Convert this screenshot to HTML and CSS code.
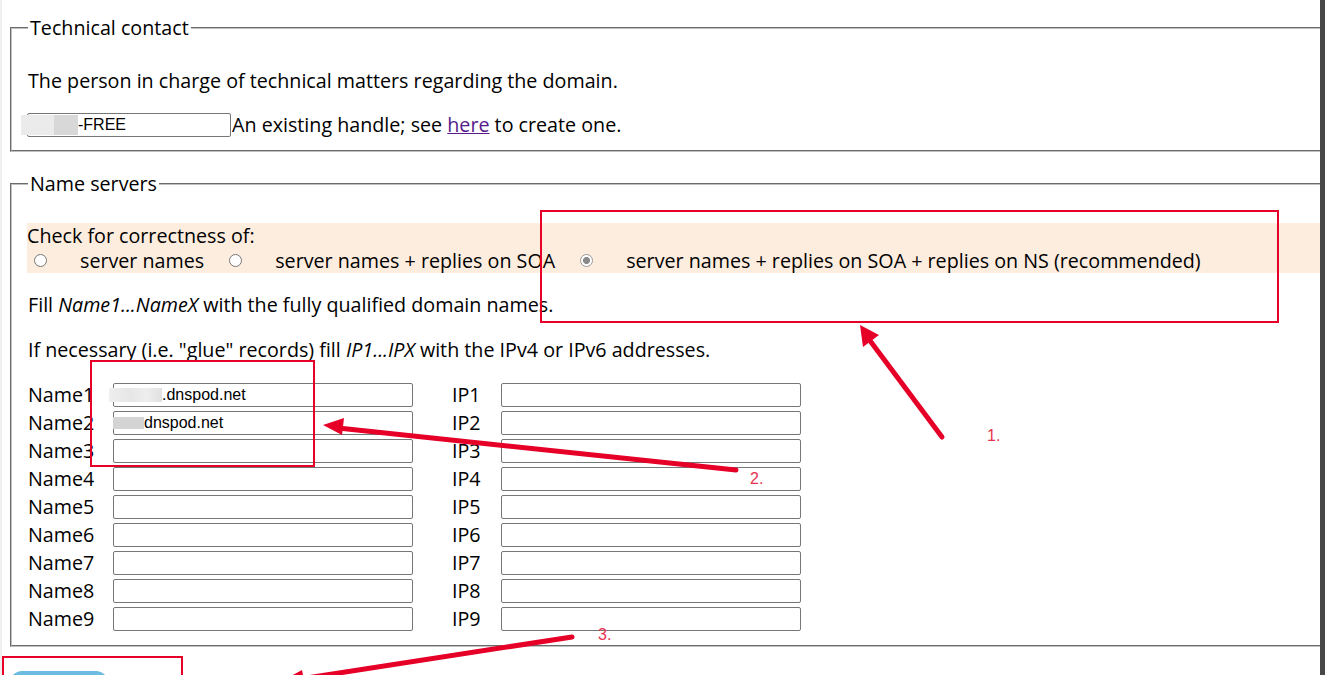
FILE: index.html
```html
<!DOCTYPE html>
<html lang="en">
<head>
<meta charset="utf-8">
<title>Domain registration</title>
<link rel="stylesheet" href="styles.css">
</head>
<body>
<div class="page">
  <fieldset class="box tech">
    <legend>Technical contact</legend>
    <p class="desc">The person in charge of technical matters regarding the domain.</p>
    <div class="handle-row">
      <div class="field handle"><span class="mask mh"></span>-FREE</div>
      <span class="hint">An existing handle; see <a href="#">here</a> to create one.</span>
    </div>
  </fieldset>

  <fieldset class="box ns">
    <legend>Name servers</legend>
    <div class="check">
      <div class="check-title">Check for correctness of:</div>
      <div class="radios">
        <span class="radio"></span><span class="rlabel">server names</span>
        <span class="radio"></span><span class="rlabel">server names + replies on SOA</span>
        <span class="radio checked"></span><span class="rlabel">server names + replies on SOA + replies on NS (recommended)</span>
      </div>
    </div>
    <p class="note">Fill <i>Name1...NameX</i> with the fully qualified domain names.</p>
    <p class="note">If necessary (i.e. "glue" records) fill <i>IP1...IPX</i> with the IPv4 or IPv6 addresses.</p>
    <div class="grid">
      <span class="lbl">Name1</span><div class="field name"><span class="mask m1"></span>.dnspod.net</div><span class="lbl">IP1</span><div class="field ip"></div>
      <span class="lbl">Name2</span><div class="field name"><span class="mask m2"></span>dnspod.net</div><span class="lbl">IP2</span><div class="field ip"></div>
      <span class="lbl">Name3</span><div class="field name"></div><span class="lbl">IP3</span><div class="field ip"></div>
      <span class="lbl">Name4</span><div class="field name"></div><span class="lbl">IP4</span><div class="field ip"></div>
      <span class="lbl">Name5</span><div class="field name"></div><span class="lbl">IP5</span><div class="field ip"></div>
      <span class="lbl">Name6</span><div class="field name"></div><span class="lbl">IP6</span><div class="field ip"></div>
      <span class="lbl">Name7</span><div class="field name"></div><span class="lbl">IP7</span><div class="field ip"></div>
      <span class="lbl">Name8</span><div class="field name"></div><span class="lbl">IP8</span><div class="field ip"></div>
      <span class="lbl">Name9</span><div class="field name"></div><span class="lbl">IP9</span><div class="field ip"></div>
    </div>
  </fieldset>

  <div class="actions"><span class="btn"></span></div>
</div>

<svg class="annot" width="1325" height="675" viewBox="0 0 1325 675" xmlns="http://www.w3.org/2000/svg">
  <g fill="none" stroke="#e60028" stroke-width="2">
    <rect x="541" y="211" width="737" height="111"/>
    <rect x="91" y="361" width="223" height="105"/>
    <rect x="3" y="657" width="179" height="40"/>
  </g>
  <g stroke="#e60028" stroke-width="5" stroke-linecap="round" fill="none">
    <line x1="942" y1="437" x2="868" y2="338"/>
    <line x1="736" y1="470" x2="338" y2="428"/>
    <line x1="572" y1="637" x2="300" y2="679"/>
  </g>
  <g fill="#e60028">
    <polygon points="860,325 863,347 879,335"/>
    <polygon points="323,425 344,418 342,435"/>
    <polygon points="276,684 302,670 306,690"/>
  </g>
  <g class="num" fill="#e8334f">
    <text x="987" y="441">1.</text>
    <text x="750" y="484">2.</text>
    <text x="598" y="640">3.</text>
  </g>
</svg>
<div class="scrollbar"></div>
</body>
</html>
```
FILE: styles.css
```css
* { box-sizing: border-box; }

html, body {
  margin: 0;
  height: 100%;
}

body {
  position: relative;
  overflow: hidden;
  font-family: "Open Sans", "Noto Sans", sans-serif;
  font-size: 19.7px;
  line-height: 24px;
  color: #000;
  background: #fff linear-gradient(to right, #efefef 0, #efefef 2px, #fff 2px);
}

.page {
  width: 1400px;
  padding-top: 16px;
}

.box {
  margin: 0 0 0 10px;
  border: 2px groove #c0c0c0;
  padding: 0 0 13px 16px;
  min-width: 0;
}

.box legend {
  padding: 0 2px;
  line-height: 24px;
}

.ns {
  margin-top: 20px;
  padding-bottom: 14px;
}

p { margin: 0; }

.desc { margin-top: 29px; }

.handle-row {
  display: flex;
  align-items: center;
  margin-top: 20px;
  margin-left: -1px;
}

.field {
  height: 24px;
  border: 1px solid #767676;
  border-radius: 2px;
  background: #fff;
  padding: 0 2px;
  font-family: "Liberation Sans", Arial, sans-serif;
  font-size: 16px;
  line-height: 22px;
  white-space: nowrap;
  display: flex;
  align-items: center;
}

.handle { width: 204px; margin-right: 1px; }

.hint a { color: #551a8b; text-decoration: underline; }

.mask { display: inline-block; flex: none; }
.mh {
  width: 57px;
  height: 20px;
  margin-left: -9px;
  background: linear-gradient(to right, #ebebeb 0, #ebebeb 33px, #d8d8d8 33px);
}
.m1 {
  width: 53px;
  height: 14px;
  margin-left: -7px;
  background: linear-gradient(to right, #efefef 0, #e6e6e6 40%, #eeeeee 70%, #e1e1e1 100%);
}
.m2 {
  width: 31px;
  height: 12px;
  margin-left: -3px;
  background: #d4d4d4;
}

.check {
  margin: 27px 0 0 -1px;
  background: #fdeddf;
}

.check-title,
.radios {
  height: 25px;
  line-height: 25px;
}

.radios {
  display: flex;
  align-items: center;
}

.radio {
  flex: none;
  width: 13px;
  height: 13px;
  margin: 0 33px 0 7px;
  border: 1px solid #767676;
  border-radius: 50%;
  background: #fff;
}

.radio.checked {
  border-color: #9a9a9a;
  background: radial-gradient(circle, #8a8a8a 0, #8a8a8a 3.2px, #fff 3.8px);
}

.rlabel { margin-right: 18px; }

.note { margin-top: 20px; }
.note + .note { margin-top: 21px; }

.grid {
  margin-top: 21px;
  display: grid;
  grid-template-columns: 85px 339px 49px 300px;
  row-gap: 4px;
  align-items: center;
}

.field.name { width: 300px; }
.field.ip { width: 300px; }

.actions {
  margin-top: 24px;
  padding-left: 10px;
}

.btn {
  display: block;
  width: 98px;
  height: 30px;
  border-radius: 12px;
  background: #6bbce0;
}

.annot {
  position: absolute;
  left: 0;
  top: 0;
  pointer-events: none;
}

.annot .num {
  font-family: "Liberation Sans", Arial, sans-serif;
  font-size: 16px;
}

.scrollbar {
  position: fixed;
  top: 0;
  right: 0;
  width: 5px;
  height: 100%;
  background: #474747;
}
```
